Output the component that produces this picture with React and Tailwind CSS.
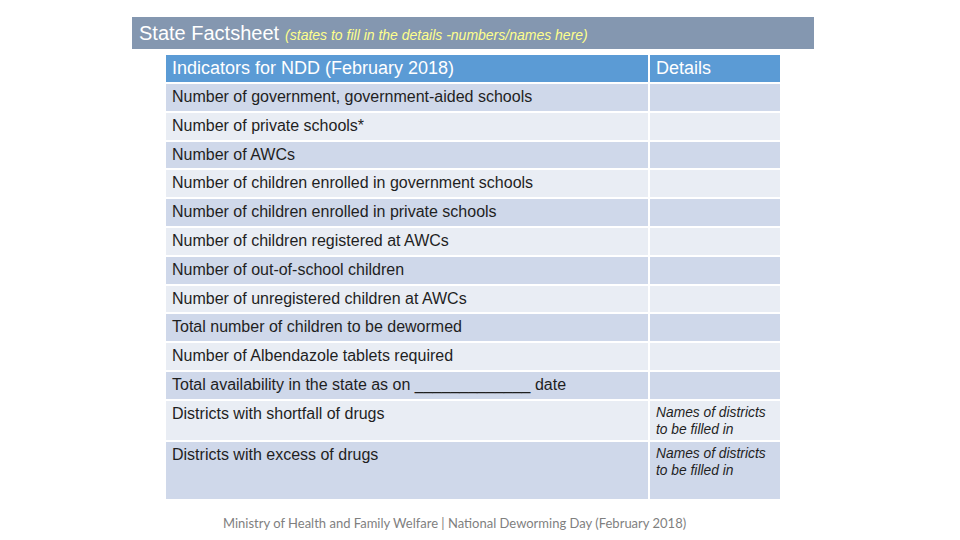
const rows = [
  'Number of government, government-aided schools',
  'Number of private schools*',
  'Number of AWCs',
  'Number of children enrolled in government schools',
  'Number of children enrolled in private schools',
  'Number of children registered at AWCs',
  'Number of out-of-school children',
  'Number of unregistered children at AWCs',
  'Total number of children to be dewormed',
  'Number of Albendazole tablets required',
];

const Row = ({ dark, h, children, detail }) => (
  <div className={`flex gap-[2px] ${h}`}>
    <div className={`w-[482px] px-[6px] pt-[1px] ${dark ? 'bg-[#cfd8ea]' : 'bg-[#e9edf4]'}`}>{children}</div>
    <div
      className={`w-[130px] px-[6px] pt-[3px] italic text-[13.8px] leading-[17px] ${dark ? 'bg-[#cfd8ea]' : 'bg-[#e9edf4]'}`}
    >
      {detail}
    </div>
  </div>
);

export default function App() {
  return (
    <div className="w-[960px] h-[540px] bg-white font-['Liberation_Sans',Arial,sans-serif] text-[#1f1f1f]">
      <div className="pt-[17px] pl-[132px]">
        <div className="w-[682px] h-[32px] bg-[#8497b0] flex items-center pl-[7px] text-white">
          <span className="text-[20px]">State Factsheet</span>
          <span className="ml-[6px] mt-[4px] text-[14px] italic text-[#ffff8c]">
            (states to fill in the details -numbers/names here)
          </span>
        </div>
      </div>

      <div className="ml-[166px] mt-[6px] w-[614px] flex flex-col gap-[2px] text-[16px]">
        <div className="flex gap-[2px] h-[27px] text-white text-[18px]">
          <div className="w-[482px] bg-[#5b9bd5] px-[6px] flex items-center">Indicators for NDD (February 2018)</div>
          <div className="w-[130px] bg-[#5b9bd5] px-[6px] flex items-center">Details</div>
        </div>
        {rows.map((r, i) => (
          <Row key={r} dark={i % 2 === 0} h="h-[26.8px]">
            {r}
          </Row>
        ))}
        <Row dark h="h-[26.8px]">
          Total availability in the state as on _____________ date
        </Row>
        <Row h="h-[39px]" detail={<>Names of districts<br />to be filled in</>}>
          Districts with shortfall of drugs
        </Row>
        <Row dark h="h-[57px]" detail={<>Names of districts<br />to be filled in</>}>
          Districts with excess of drugs
        </Row>
      </div>

      <div className="mt-[15px] ml-[223px] text-[13px] text-[#7f7f7f] font-['Lato',sans-serif]">
        Ministry of Health and Family Welfare | National Deworming Day (February 2018)
      </div>
    </div>
  );
}
